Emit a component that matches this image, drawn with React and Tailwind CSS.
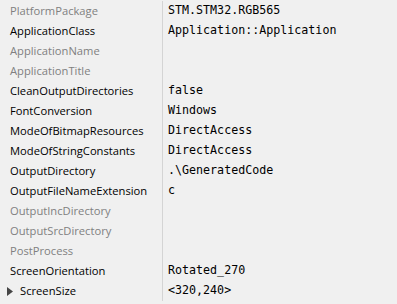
import React from 'react';

const rows = [
  { name: 'PlatformPackage', value: 'STM.STM32.RGB565', dim: true },
  { name: 'ApplicationClass', value: 'Application::Application' },
  { name: 'ApplicationName', value: '', dim: true },
  { name: 'ApplicationTitle', value: '', dim: true },
  { name: 'CleanOutputDirectories', value: 'false' },
  { name: 'FontConversion', value: 'Windows' },
  { name: 'ModeOfBitmapResources', value: 'DirectAccess' },
  { name: 'ModeOfStringConstants', value: 'DirectAccess' },
  { name: 'OutputDirectory', value: '.\\GeneratedCode' },
  { name: 'OutputFileNameExtension', value: 'c' },
  { name: 'OutputIncDirectory', value: '', dim: true },
  { name: 'OutputSrcDirectory', value: '', dim: true },
  { name: 'PostProcess', value: '', dim: true },
  { name: 'ScreenOrientation', value: 'Rotated_270' },
  { name: 'ScreenSize', value: '<320,240>', expand: true },
];

const App = () => {
  return (
    <div className="w-[397px] h-[304px] bg-[#f0f0f0] overflow-hidden pt-px">
      {rows.map((r) => (
        <div key={r.name} className="flex h-5 items-center">
          {/* property name */}
          <div
            className={`w-[162px] h-full flex items-center text-[11.2px] font-['Open_Sans',sans-serif] ${
              r.dim ? 'text-[#808080]' : 'text-black'
            } ${r.expand ? 'pl-[7px]' : 'pl-[10px]'}`}
          >
            {r.expand && (
              <svg width="6" height="9" viewBox="0 0 6 9" className="mr-[7px]">
                <path d="M0 0 L6 4.5 L0 9 Z" fill="#454545" />
              </svg>
            )}
            {r.name}
          </div>
          <div className="w-px h-full bg-[#d4d4d4]" />
          {/* value */}
          <div className="pl-[5px] text-[11.67px] font-['DejaVu_Sans_Mono',monospace] text-black whitespace-pre">
            {r.value}
          </div>
        </div>
      ))}
    </div>
  );
};

export default App;
